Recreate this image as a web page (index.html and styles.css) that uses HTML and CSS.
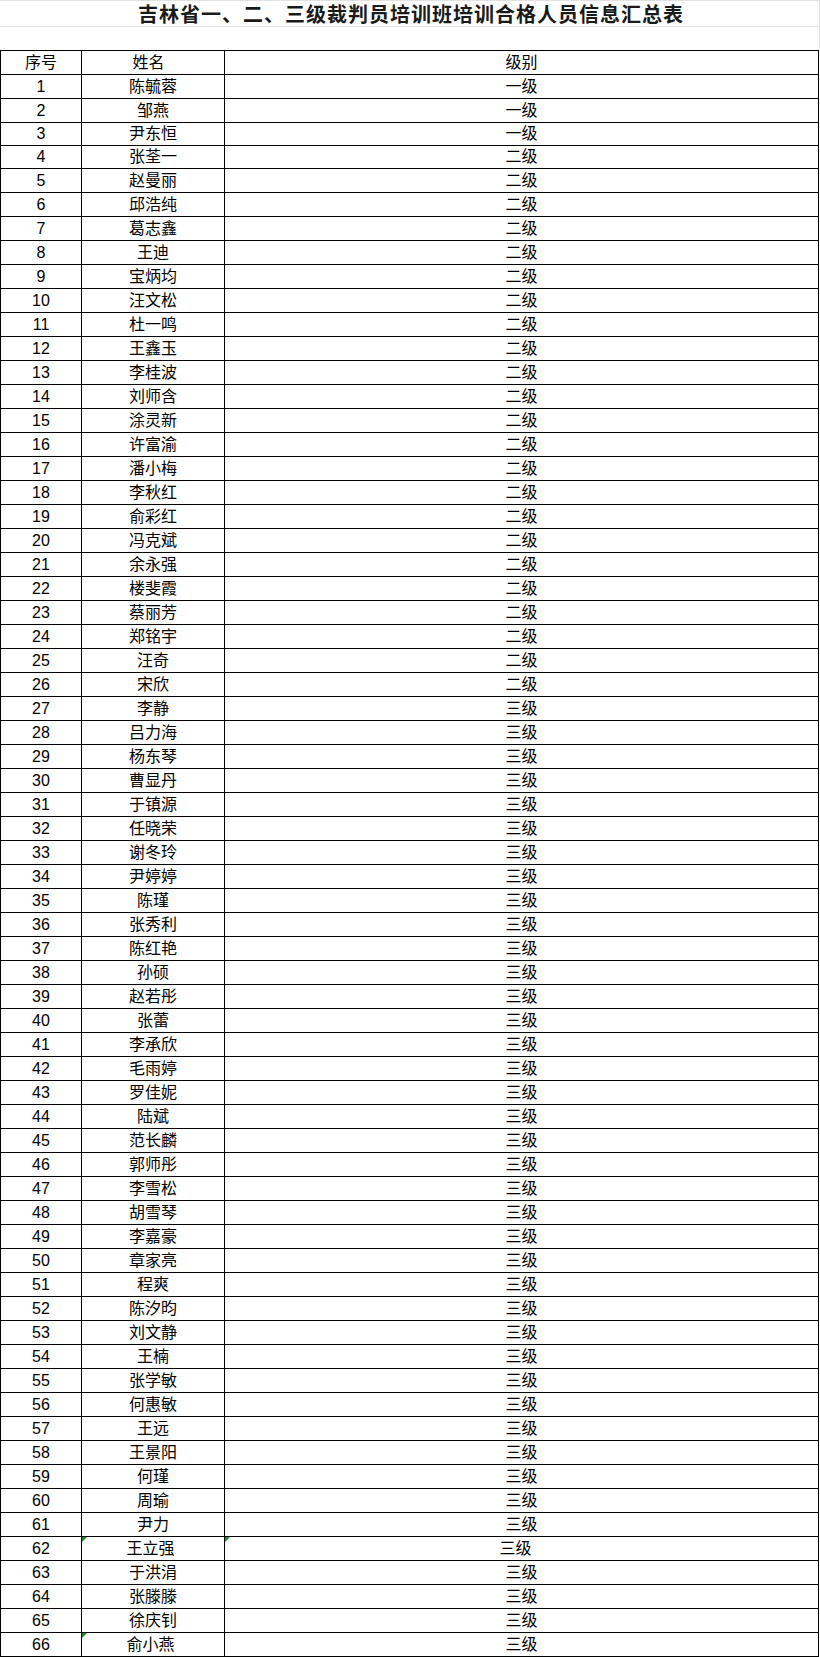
FILE: index.html
```html
<!DOCTYPE html>
<html lang="zh-CN">
<head>
<meta charset="utf-8">
<title>吉林省一、二、三级裁判员培训班培训合格人员信息汇总表</title>
<link rel="stylesheet" href="styles.css">
</head>
<body>
<div class="sheet">
  <div class="title">吉林省一、二、三级裁判员培训班培训合格人员信息汇总表</div>
  <div class="blank"></div>
  <div class="table">
    <div class="row"><div class="cell">序号</div><div class="cell name-head">姓名</div><div class="cell">级别</div></div>
    <div class="row"><div class="cell">1</div><div class="cell">陈毓蓉</div><div class="cell">一级</div></div>
    <div class="row"><div class="cell">2</div><div class="cell">邹燕</div><div class="cell">一级</div></div>
    <div class="row short"><div class="cell">3</div><div class="cell">尹东恒</div><div class="cell">一级</div></div>
    <div class="row short"><div class="cell">4</div><div class="cell">张荃一</div><div class="cell">二级</div></div>
    <div class="row"><div class="cell">5</div><div class="cell">赵曼丽</div><div class="cell">二级</div></div>
    <div class="row"><div class="cell">6</div><div class="cell">邱浩纯</div><div class="cell">二级</div></div>
    <div class="row"><div class="cell">7</div><div class="cell">葛志鑫</div><div class="cell">二级</div></div>
    <div class="row"><div class="cell">8</div><div class="cell">王迪</div><div class="cell">二级</div></div>
    <div class="row"><div class="cell">9</div><div class="cell">宝炳均</div><div class="cell">二级</div></div>
    <div class="row"><div class="cell">10</div><div class="cell">汪文松</div><div class="cell">二级</div></div>
    <div class="row"><div class="cell">11</div><div class="cell">杜一鸣</div><div class="cell">二级</div></div>
    <div class="row"><div class="cell">12</div><div class="cell">王鑫玉</div><div class="cell">二级</div></div>
    <div class="row"><div class="cell">13</div><div class="cell">李桂波</div><div class="cell">二级</div></div>
    <div class="row"><div class="cell">14</div><div class="cell">刘师含</div><div class="cell">二级</div></div>
    <div class="row"><div class="cell">15</div><div class="cell">涂灵新</div><div class="cell">二级</div></div>
    <div class="row"><div class="cell">16</div><div class="cell">许富渝</div><div class="cell">二级</div></div>
    <div class="row"><div class="cell">17</div><div class="cell">潘小梅</div><div class="cell">二级</div></div>
    <div class="row"><div class="cell">18</div><div class="cell">李秋红</div><div class="cell">二级</div></div>
    <div class="row"><div class="cell">19</div><div class="cell">俞彩红</div><div class="cell">二级</div></div>
    <div class="row"><div class="cell">20</div><div class="cell">冯克斌</div><div class="cell">二级</div></div>
    <div class="row"><div class="cell">21</div><div class="cell">余永强</div><div class="cell">二级</div></div>
    <div class="row"><div class="cell">22</div><div class="cell">楼斐霞</div><div class="cell">二级</div></div>
    <div class="row"><div class="cell">23</div><div class="cell">蔡丽芳</div><div class="cell">二级</div></div>
    <div class="row"><div class="cell">24</div><div class="cell">郑铭宇</div><div class="cell">二级</div></div>
    <div class="row"><div class="cell">25</div><div class="cell">汪奇</div><div class="cell">二级</div></div>
    <div class="row"><div class="cell">26</div><div class="cell">宋欣</div><div class="cell">二级</div></div>
    <div class="row"><div class="cell">27</div><div class="cell">李静</div><div class="cell">三级</div></div>
    <div class="row"><div class="cell">28</div><div class="cell">吕力海</div><div class="cell">三级</div></div>
    <div class="row"><div class="cell">29</div><div class="cell">杨东琴</div><div class="cell">三级</div></div>
    <div class="row"><div class="cell">30</div><div class="cell">曹显丹</div><div class="cell">三级</div></div>
    <div class="row"><div class="cell">31</div><div class="cell">于镇源</div><div class="cell">三级</div></div>
    <div class="row"><div class="cell">32</div><div class="cell">任晓荣</div><div class="cell">三级</div></div>
    <div class="row"><div class="cell">33</div><div class="cell">谢冬玲</div><div class="cell">三级</div></div>
    <div class="row"><div class="cell">34</div><div class="cell">尹婷婷</div><div class="cell">三级</div></div>
    <div class="row"><div class="cell">35</div><div class="cell">陈瑾</div><div class="cell">三级</div></div>
    <div class="row"><div class="cell">36</div><div class="cell">张秀利</div><div class="cell">三级</div></div>
    <div class="row"><div class="cell">37</div><div class="cell">陈红艳</div><div class="cell">三级</div></div>
    <div class="row"><div class="cell">38</div><div class="cell">孙硕</div><div class="cell">三级</div></div>
    <div class="row"><div class="cell">39</div><div class="cell">赵若彤</div><div class="cell">三级</div></div>
    <div class="row"><div class="cell">40</div><div class="cell">张蕾</div><div class="cell">三级</div></div>
    <div class="row"><div class="cell">41</div><div class="cell">李承欣</div><div class="cell">三级</div></div>
    <div class="row"><div class="cell">42</div><div class="cell">毛雨婷</div><div class="cell">三级</div></div>
    <div class="row"><div class="cell">43</div><div class="cell">罗佳妮</div><div class="cell">三级</div></div>
    <div class="row"><div class="cell">44</div><div class="cell">陆斌</div><div class="cell">三级</div></div>
    <div class="row"><div class="cell">45</div><div class="cell">范长麟</div><div class="cell">三级</div></div>
    <div class="row"><div class="cell">46</div><div class="cell">郭师彤</div><div class="cell">三级</div></div>
    <div class="row"><div class="cell">47</div><div class="cell">李雪松</div><div class="cell">三级</div></div>
    <div class="row"><div class="cell">48</div><div class="cell">胡雪琴</div><div class="cell">三级</div></div>
    <div class="row"><div class="cell">49</div><div class="cell">李嘉豪</div><div class="cell">三级</div></div>
    <div class="row"><div class="cell">50</div><div class="cell">章家亮</div><div class="cell">三级</div></div>
    <div class="row"><div class="cell">51</div><div class="cell">程爽</div><div class="cell">三级</div></div>
    <div class="row"><div class="cell">52</div><div class="cell">陈汐昀</div><div class="cell">三级</div></div>
    <div class="row"><div class="cell">53</div><div class="cell">刘文静</div><div class="cell">三级</div></div>
    <div class="row"><div class="cell">54</div><div class="cell">王楠</div><div class="cell">三级</div></div>
    <div class="row"><div class="cell">55</div><div class="cell">张学敏</div><div class="cell">三级</div></div>
    <div class="row"><div class="cell">56</div><div class="cell">何惠敏</div><div class="cell">三级</div></div>
    <div class="row"><div class="cell">57</div><div class="cell">王远</div><div class="cell">三级</div></div>
    <div class="row"><div class="cell">58</div><div class="cell">王景阳</div><div class="cell">三级</div></div>
    <div class="row"><div class="cell">59</div><div class="cell">何瑾</div><div class="cell">三级</div></div>
    <div class="row"><div class="cell">60</div><div class="cell">周瑜</div><div class="cell">三级</div></div>
    <div class="row"><div class="cell">61</div><div class="cell">尹力</div><div class="cell">三级</div></div>
    <div class="row"><div class="cell">62</div><div class="cell flag shift-s">王立强</div><div class="cell flag shift-l">三级</div></div>
    <div class="row"><div class="cell">63</div><div class="cell">于洪涓</div><div class="cell">三级</div></div>
    <div class="row"><div class="cell">64</div><div class="cell">张滕滕</div><div class="cell">三级</div></div>
    <div class="row"><div class="cell">65</div><div class="cell">徐庆钊</div><div class="cell">三级</div></div>
    <div class="row"><div class="cell">66</div><div class="cell flag shift-s">俞小燕</div><div class="cell">三级</div></div>
  </div>
</div>
</body>
</html>
```

FILE: styles.css
```css
html, body {
  margin: 0;
  padding: 0;
  background: #ffffff;
}

body {
  font-family: "Liberation Sans", "Noto Sans CJK SC", sans-serif;
  font-size: 16px;
  color: #000000;
}

.sheet {
  width: 820px;
}

.title {
  box-sizing: border-box;
  width: 820px;
  height: 27px;
  border-top: 1px solid #e2e2e2;
  border-bottom: 1px solid #e2e2e2;
  border-right: 1px solid #e2e2e2;
  text-align: center;
  font-family: "Noto Sans CJK SC", sans-serif;
  font-weight: bold;
  font-size: 20px;
  letter-spacing: 1px;
  line-height: 26px;
  color: #1a1a1a;
  padding-left: 3px;
}

.blank {
  box-sizing: border-box;
  width: 820px;
  height: 23px;
  border-right: 1px solid #e2e2e2;
}

.table {
  width: 819px;
  box-sizing: border-box;
  border-top: 1px solid #000;
  border-left: 1px solid #000;
}

.row {
  display: grid;
  grid-template-columns: 81px 143px 594px;
  height: 24px;
}

.row.short {
  height: 23px;
}

.cell {
  position: relative;
  box-sizing: border-box;
  border-right: 1px solid #000;
  border-bottom: 1px solid #000;
  display: flex;
  align-items: center;
  justify-content: center;
  line-height: 1;
  white-space: nowrap;
}

.name-head {
  padding-right: 9px;
}

.shift-s {
  padding-right: 5px;
}

.shift-l {
  padding-right: 12px;
}

.flag::before {
  content: "";
  position: absolute;
  top: 0;
  left: 0;
  width: 0;
  height: 0;
  border-top: 5px solid #1f8a1f;
  border-right: 5px solid transparent;
}
```
